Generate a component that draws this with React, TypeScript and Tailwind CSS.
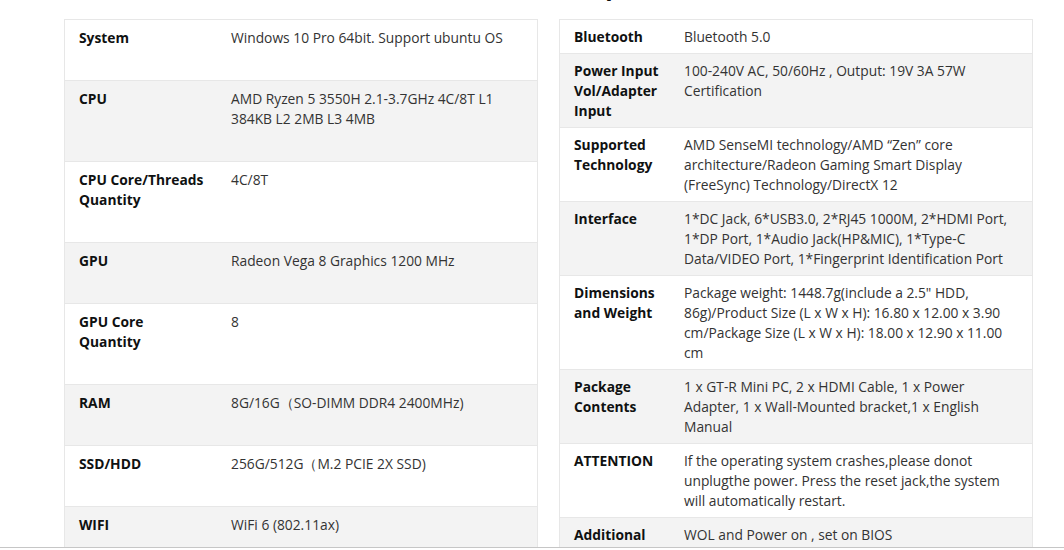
import React from 'react';

type Spec = { label: string[]; value: string[] };

const leftSpecs: Spec[] = [
	{ label: ['System'], value: ['Windows 10 Pro 64bit. Support ubuntu OS'] },
	{ label: ['CPU'], value: ['AMD Ryzen 5 3550H 2.1-3.7GHz 4C/8T L1', '384KB L2 2MB L3 4MB'] },
	{ label: ['CPU Core/Threads', 'Quantity'], value: ['4C/8T'] },
	{ label: ['GPU'], value: ['Radeon Vega 8 Graphics 1200 MHz'] },
	{ label: ['GPU Core', 'Quantity'], value: ['8'] },
	{ label: ['RAM'], value: ['8G/16G（SO-DIMM DDR4 2400MHz)'] },
	{ label: ['SSD/HDD'], value: ['256G/512G（M.2 PCIE 2X SSD)'] },
	{ label: ['WIFI'], value: ['WiFi 6 (802.11ax)'] },
];

const rightSpecs: Spec[] = [
	{ label: ['Bluetooth'], value: ['Bluetooth 5.0'] },
	{ label: ['Power Input', 'Vol/Adapter', 'Input'], value: ['100-240V AC, 50/60Hz , Output: 19V 3A 57W', 'Certification'] },
	{
		label: ['Supported', 'Technology'],
		value: ['AMD SenseMI technology/AMD “Zen” core', 'architecture/Radeon Gaming Smart Display', '(FreeSync) Technology/DirectX 12'],
	},
	{
		label: ['Interface'],
		value: ['1*DC Jack, 6*USB3.0, 2*RJ45 1000M, 2*HDMI Port,', '1*DP Port, 1*Audio Jack(HP&MIC), 1*Type-C', 'Data/VIDEO Port, 1*Fingerprint Identification Port'],
	},
	{
		label: ['Dimensions', 'and Weight'],
		value: [
			'Package weight: 1448.7g(include a 2.5" HDD,',
			'86g)/Product Size (L x W x H): 16.80 x 12.00 x 3.90',
			'cm/Package Size (L x W x H): 18.00 x 12.90 x 11.00',
			'cm',
		],
	},
	{
		label: ['Package', 'Contents'],
		value: ['1 x GT-R Mini PC, 2 x HDMI Cable, 1 x Power', 'Adapter, 1 x Wall-Mounted bracket,1 x English', 'Manual'],
	},
	{
		label: ['ATTENTION'],
		value: ['If the operating system crashes,please donot', 'unplugthe power. Press the reset jack,the system', 'will automatically restart.'],
	},
	{ label: ['Additional', 'Features'], value: ['WOL and Power on , set on BIOS'] },
];

const Lines = ({ lines }: { lines: string[] }) => (
	<>
		{lines.map((l, i) => (
			<div key={i} className="whitespace-nowrap">
				{l}
			</div>
		))}
	</>
);

// roomy = the left table, where every cell carries an empty line after its text
const SpecTable = ({ specs, labelWidth, roomy }: { specs: Spec[]; labelWidth: string; roomy?: boolean }) => (
	<div className="w-[474px] shrink-0 border border-[#e7e7e7] self-start">
		{specs.map((s, i) => (
			<div
				key={i}
				className={`grid ${labelWidth} ${i > 0 ? 'border-t border-[#e7e7e7]' : ''} ${i % 2 === 1 ? 'bg-[#f3f3f3]' : 'bg-white'}`}
			>
				<div className={`pl-[14px] pr-[15px] font-bold text-[#0f1111] ${roomy ? 'pt-[8px] pb-[32px]' : 'pt-[7px] pb-[6px]'}`}>
					<Lines lines={s.label} />
				</div>
				<div className={`pl-[14px] pr-[15px] text-[#333333] ${roomy ? 'pt-[8px] pb-[32px]' : 'pt-[7px] pb-[6px]'}`}>
					<Lines lines={s.value} />
				</div>
			</div>
		))}
	</div>
);

export default function App() {
	return (
		<div className="w-[1064px] h-[550px] bg-white overflow-hidden font-['Open_Sans',sans-serif] text-[13.8px] leading-[20px]">
			<div className="h-[547px] overflow-hidden">
				<div className="h-[19px] overflow-hidden pl-[592px]">
					<h2 className="mt-[-30px] text-[24px] leading-[32px] font-bold text-[#0f1111]">Specifications</h2>
				</div>
				<div className="flex gap-[21px] pl-[64px]">
					<SpecTable specs={leftSpecs} labelWidth="grid-cols-[152px_1fr]" roomy />
					<SpecTable specs={rightSpecs} labelWidth="grid-cols-[110px_1fr]" />
				</div>
			</div>
			<div className="h-px bg-[#c6c6c6]" />
		</div>
	);
}
